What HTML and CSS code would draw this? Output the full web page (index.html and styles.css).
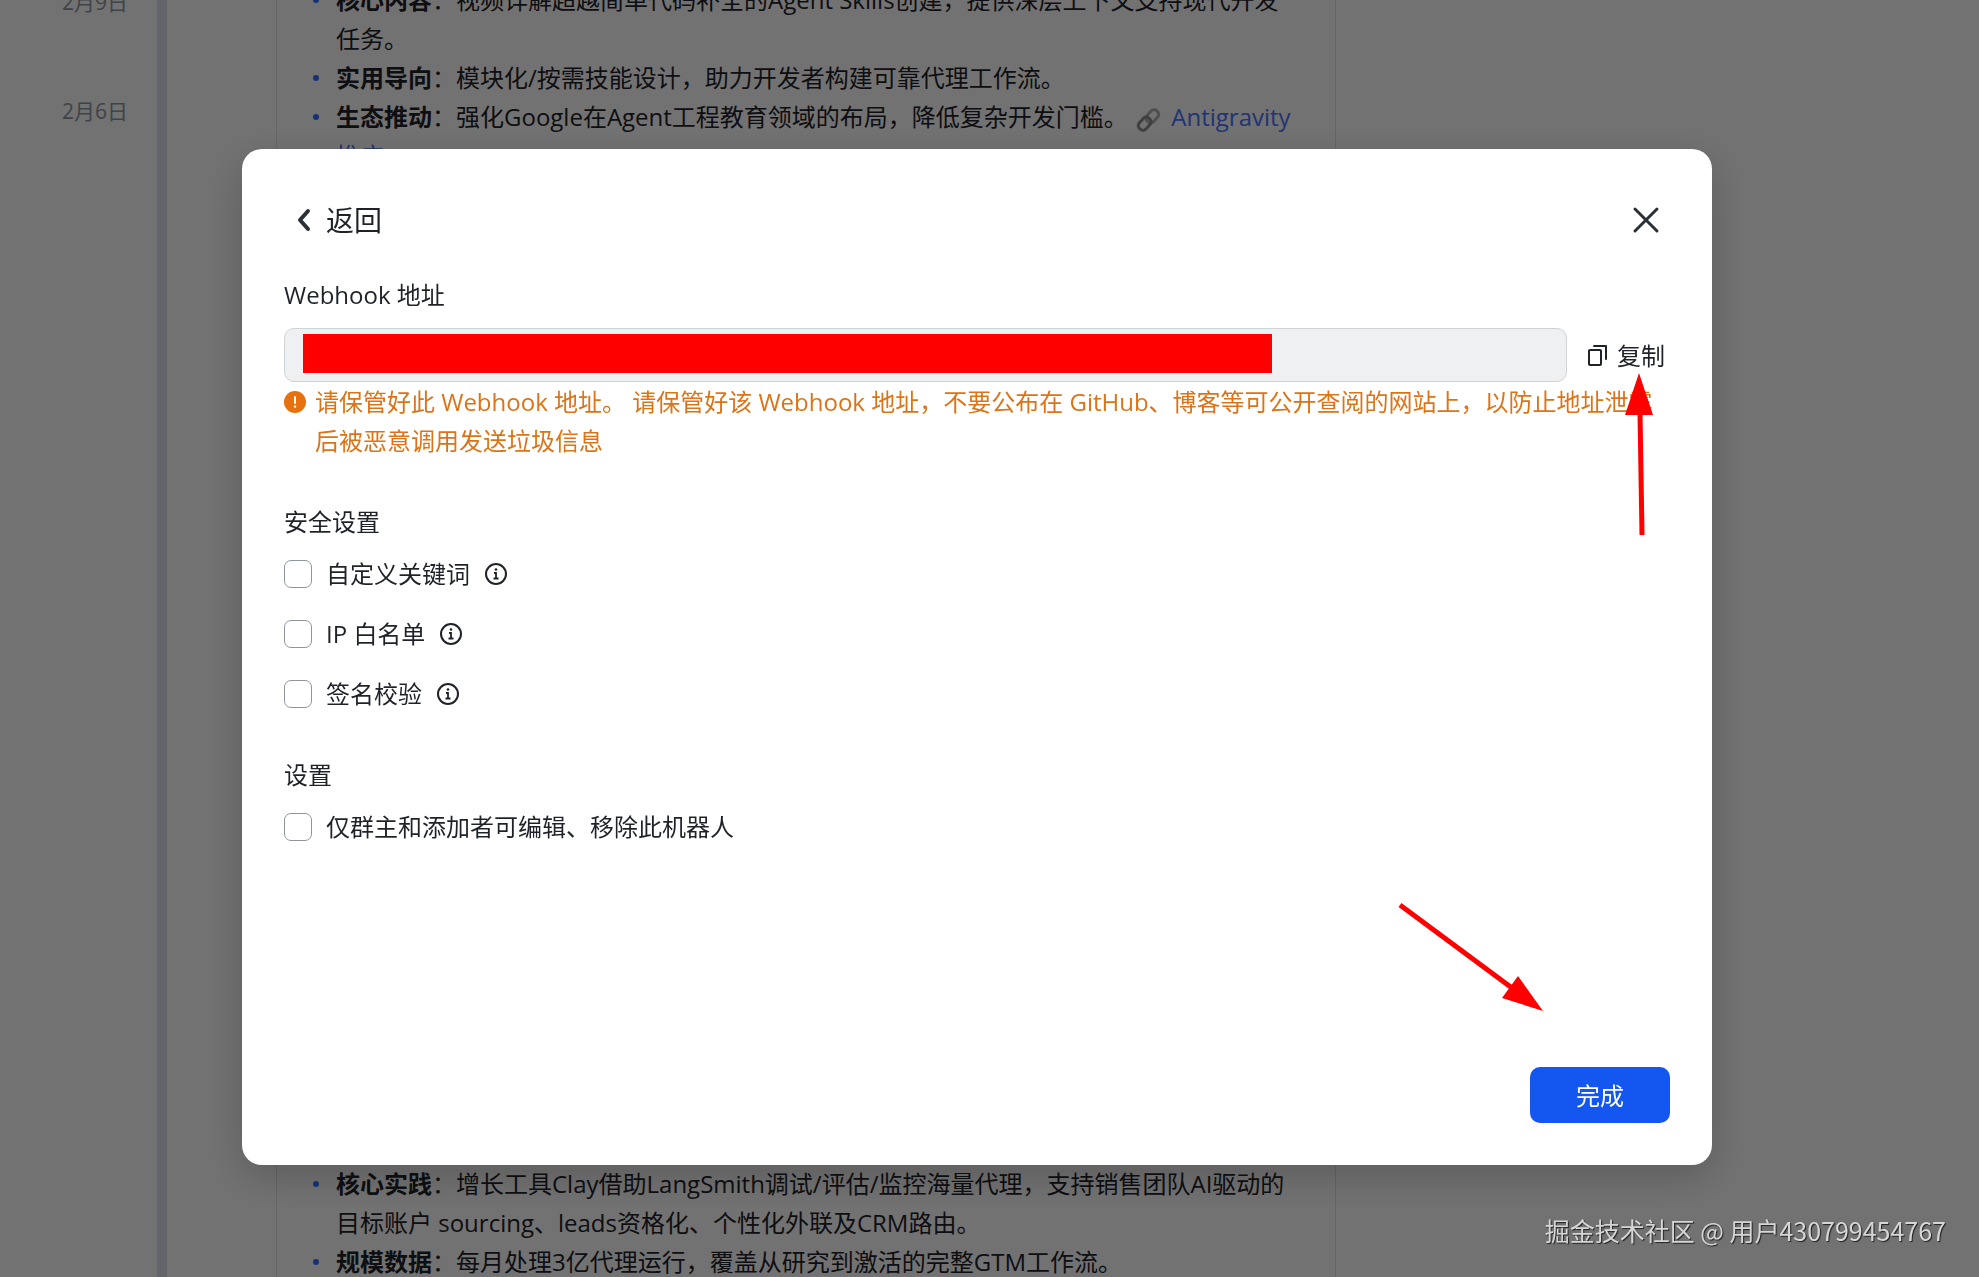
FILE: index.html
```html
<!DOCTYPE html>
<html lang="zh-CN">
<head>
  <meta charset="UTF-8">
  <meta name="viewport" content="width=device-width, initial-scale=1.0">
  <title>Webhook 设置</title>
  <link rel="stylesheet" href="styles.css">
</head>
<body>
  <main class="feed">
    <div class="dates">
      <time>2月9日</time>
      <time>2月6日</time>
    </div>
    <div class="timeline"></div>
    <article class="card">
      <ul>
        <li><b>核心内容</b>：视频详解超越简单代码补全的Agent Skills创建，提供深层上下文支持现代开发任务。</li>
        <li><b>实用导向</b>：模块化/按需技能设计，助力开发者构建可靠代理工作流。</li>
        <li><b>生态推动</b>：强化Google在Agent工程教育领域的布局，降低复杂开发门槛。
          <svg class="link-icon" width="25" height="26" viewBox="0 0 25 26" fill="none" stroke-width="3">
            <rect x="12" y="2" width="9" height="14" rx="4" transform="rotate(42 16 9)" stroke="#b0b0b0"/>
            <rect x="4" y="10" width="9" height="14" rx="4" transform="rotate(42 9 17)" stroke="#8c8c8c"/>
          </svg>
          <a href="#">Antigravity 推广</a></li>
      </ul>
      <ul>
        <li><b>核心实践</b>：增长工具Clay借助LangSmith调试/评估/监控海量代理，支持销售团队AI驱动的目标账户 sourcing、leads资格化、个性化外联及CRM路由。</li>
        <li><b>规模数据</b>：每月处理3亿代理运行，覆盖从研究到激活的完整GTM工作流。</li>
      </ul>
    </article>
  </main>

  <div class="overlay">
    <form class="modal" role="dialog" aria-label="Webhook 设置">
      <header class="modal-header">
        <button type="button" class="back">
          <svg width="28" height="28" viewBox="0 0 28 28" fill="none" stroke="#2b2f36" stroke-width="4" stroke-linecap="round" stroke-linejoin="round">
            <path d="M18 5l-8 9 8 9"/>
          </svg>
          返回
        </button>
        <button type="button" class="close" aria-label="关闭">
          <svg width="28" height="28" viewBox="0 0 28 28" fill="none" stroke="#2b2f36" stroke-width="3" stroke-linecap="round">
            <path d="M3 3l22 22M25 3L3 25"/>
          </svg>
        </button>
      </header>

      <label class="title" for="webhook">Webhook 地址</label>
      <div class="address">
        <div class="field">
          <input type="text" id="webhook" readonly>
          <span class="redacted"></span>
        </div>
        <button type="button" class="copy">
          <svg width="22" height="24" viewBox="0 0 22 24" fill="none" stroke="#1f2329" stroke-width="2" stroke-linejoin="round">
            <rect x="2" y="7" width="12" height="15" rx="1"/>
            <path d="M7 3h12v13" stroke-linecap="round"/>
          </svg>
          复制
        </button>
      </div>
      <div class="warning">
        <svg width="22" height="22" viewBox="0 0 22 22">
          <circle cx="11" cy="11" r="11" fill="#e8710f"/>
          <path d="M11 6v6" stroke="white" stroke-width="2" stroke-linecap="round"/>
          <circle cx="11" cy="15.500" r="1.200" fill="white"/>
        </svg>
        <p>请保管好此 Webhook 地址。 请保管好该 Webhook 地址，不要公布在 GitHub、博客等可公开查阅的网站上，以防止地址泄露后被恶意调用发送垃圾信息</p>
      </div>

      <section class="options">
        <h2 class="title">安全设置</h2>
        <div class="option">
          <input type="checkbox" id="keyword">
          <label for="keyword">自定义关键词</label>
          <svg class="info" width="24" height="24" viewBox="0 0 24 24"><use href="#info"/></svg>
        </div>
        <div class="option">
          <input type="checkbox" id="ip">
          <label for="ip">IP 白名单</label>
          <svg class="info" width="24" height="24" viewBox="0 0 24 24"><use href="#info"/></svg>
        </div>
        <div class="option">
          <input type="checkbox" id="sign">
          <label for="sign">签名校验</label>
          <svg class="info" width="24" height="24" viewBox="0 0 24 24"><use href="#info"/></svg>
        </div>
      </section>

      <section class="options">
        <h2 class="title">设置</h2>
        <div class="option">
          <input type="checkbox" id="owner">
          <label for="owner">仅群主和添加者可编辑、移除此机器人</label>
        </div>
      </section>

      <footer class="modal-footer">
        <button type="submit" class="done">完成</button>
      </footer>

      <svg class="arrow arrow-copy" width="28" height="162" viewBox="0 0 28 162">
        <path d="M14 0l14 42H0z" fill="red"/>
        <path d="M15 40l2 122" stroke="red" stroke-width="5"/>
      </svg>
      <svg class="arrow arrow-done" width="145" height="109" viewBox="0 0 145 109">
        <path d="M145 109l-25-35-16 22z" fill="red"/>
        <path d="M2 3l112 83" stroke="red" stroke-width="5"/>
      </svg>
    </form>
  </div>

  <div class="watermark">掘金技术社区 @ 用户430799454767</div>

  <svg width="0" height="0" class="sprite">
    <symbol id="info" viewBox="0 0 24 24">
      <circle cx="12" cy="12" r="10" fill="none" stroke="#1f2329" stroke-width="2"/>
      <circle cx="12" cy="7.500" r="1.300" fill="#1f2329"/>
      <path d="M10 11h2v5.500M9.500 16.500h5" fill="none" stroke="#1f2329" stroke-width="1.800"/>
    </symbol>
  </svg>
</body>
</html>
```
FILE: styles.css
```css
* {
  box-sizing: border-box;
}

body {
  margin: 0;
  height: 100vh;
  overflow: hidden;
  background: #fcfcfc;
  color: #1f2329;
  font-family: "Open Sans", "Noto Sans CJK SC", sans-serif;
  font-size: 24px;
  line-height: 39px;
}

button {
  padding: 0;
  border: none;
  background: none;
  color: inherit;
  font: inherit;
  cursor: pointer;
}

/* page behind the dialog, scrolled half a line */
.feed {
  display: grid;
  grid-template-columns: 157px 10px 1fr;
  min-height: calc(100vh + 24px);
  margin-top: -20px;
}

.dates {
  display: flex;
  flex-direction: column;
  gap: 70px;
  padding: 3px 29px 0 0;
  text-align: right;
  color: #8f959e;
  font-size: 21px;
}

.timeline {
  background: #dbe1ee;
}

.card {
  display: flex;
  flex-direction: column;
  justify-content: space-between;
  margin: 0 643px 0 109px;
  padding: 0 34px;
  border: 1px solid #dee0e3;
  border-width: 0 1px;
}

.card ul {
  margin: 0;
  padding: 0 0 0 25px;
  list-style: none;
}

.card li {
  position: relative;
}

.card li::before {
  content: "";
  position: absolute;
  left: -23px;
  top: 17px;
  width: 6px;
  height: 6px;
  border-radius: 50%;
  background: #3370ff;
}

.card a {
  color: #4b74ff;
  text-decoration: none;
}

.link-icon {
  margin: 0 4px 0 2px;
  vertical-align: middle;
}

.overlay {
  position: fixed;
  inset: 0;
  display: flex;
  padding: 149px 267px 112px 242px;
  background: rgba(0, 0, 0, 0.55);
}

.modal {
  position: relative;
  flex: 1;
  display: flex;
  flex-direction: column;
  padding: 51px 42px 42px;
  border-radius: 20px;
  background: white;
  box-shadow: 0 12px 40px rgba(0, 0, 0, 0.2);
}

.modal-header {
  display: flex;
  justify-content: space-between;
  align-items: center;
  height: 40px;
  margin-bottom: 35px;
  padding: 0 10px 0 6px;
}

.back {
  display: flex;
  align-items: center;
  gap: 8px;
  font-size: 28px;
}

.close {
  display: flex;
}

.title {
  margin: 0;
  font-size: 24px;
  font-weight: normal;
}

.address {
  display: flex;
  align-items: center;
  gap: 20px;
  margin-top: 14px;
  padding-right: 5px;
}

.field {
  position: relative;
  flex: 1;
}

.field input {
  display: block;
  width: 100%;
  height: 54px;
  padding: 0 18px;
  border: 1px solid #d0d3d6;
  border-radius: 10px;
  background: #eff0f1;
  font: inherit;
}

.redacted {
  position: absolute;
  left: 19px;
  top: 6px;
  width: 969px;
  max-width: 90%;
  height: 39px;
  background: red;
}

.copy {
  display: flex;
  align-items: center;
  gap: 8px;
}

.warning {
  display: flex;
  gap: 9px;
  color: #dc7316;
}

.warning svg {
  flex: none;
  margin-top: 9px;
}

.warning p {
  margin: 0;
}

.options {
  display: flex;
  flex-direction: column;
  gap: 21px;
  margin-top: 42px;
}

.options .title {
  margin-bottom: -8px;
}

.option {
  display: flex;
  align-items: center;
  gap: 14px;
}

.option input {
  appearance: none;
  width: 28px;
  height: 28px;
  margin: 0;
  border: 1px solid #8f959e;
  border-radius: 7px;
  background: white;
}

.modal-footer {
  display: flex;
  justify-content: flex-end;
  margin-top: auto;
}

.done {
  width: 140px;
  height: 56px;
  border-radius: 10px;
  background: #1456f0;
  color: white;
}

.arrow {
  position: absolute;
  pointer-events: none;
}

.arrow-copy {
  top: 224px;
  right: 59px;
}

.arrow-done {
  right: 169px;
  bottom: 154px;
}

.watermark {
  position: fixed;
  right: 33px;
  bottom: 27px;
  color: #d6d6d6;
  font-family: "Noto Sans CJK SC", sans-serif;
  font-size: 25px;
  text-shadow: 1px 1px 1px #222;
}

.sprite {
  position: absolute;
}
```
